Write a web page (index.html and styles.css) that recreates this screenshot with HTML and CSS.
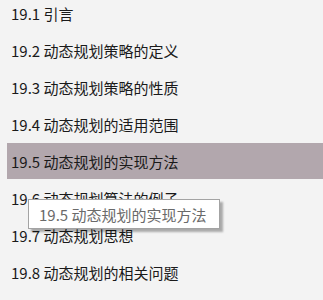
FILE: index.html
```html
<!DOCTYPE html>
<html lang="zh-CN">
<head>
<meta charset="utf-8">
<link rel="stylesheet" href="styles.css">
</head>
<body>
<div class="page">
  <ul class="toc">
    <li class="item">19.1 引言</li>
    <li class="item">19.2 动态规划策略的定义</li>
    <li class="item">19.3 动态规划策略的性质</li>
    <li class="item">19.4 动态规划的适用范围</li>
    <li class="item active">19.5 动态规划的实现方法</li>
    <li class="item">19.6 动态规划算法的例子</li>
    <li class="item">19.7 动态规划思想</li>
    <li class="item">19.8 动态规划的相关问题</li>
  </ul>
  <div class="tooltip">19.5 动态规划的实现方法</div>
</div>
</body>
</html>
```
FILE: styles.css
```css
html, body {
  margin: 0;
  padding: 0;
  background: #f3f3f3;
}
body {
  font-family: "Noto Sans CJK SC", "Noto Sans", sans-serif;
  font-size: 15px;
  color: #1a1a1a;
  overflow: hidden;
}
.page {
  position: relative;
  width: 323px;
  height: 300px;
  overflow: hidden;
}
.toc {
  list-style: none;
  margin: -5px 0 0 7px;
  padding: 0;
}
.item {
  height: 36px;
  margin-bottom: 1px;
  padding-left: 4px;
  display: flex;
  align-items: center;
  white-space: nowrap;
}
.item.active {
  background: #b2a7ad;
}
.tooltip {
  position: absolute;
  left: 28px;
  top: 199px;
  width: 180px;
  height: 28px;
  padding-left: 10px;
  display: flex;
  align-items: center;
  background: #ffffff;
  border: 1px solid #a3a3a3;
  box-shadow: 3px 3px 2px rgba(0, 0, 0, 0.3);
  color: #6a6a6a;
  white-space: nowrap;
}
```
